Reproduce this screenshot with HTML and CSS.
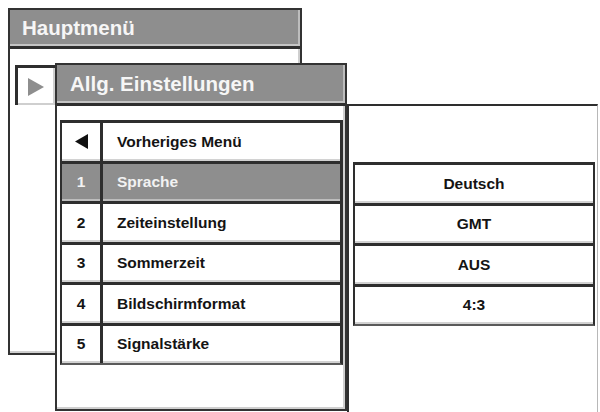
FILE: index.html
```html
<!DOCTYPE html>
<html lang="de">
<head>
<meta charset="utf-8">
<title>Allg. Einstellungen</title>
<link rel="stylesheet" href="styles.css">
</head>
<body>
<div class="screen">
  <section class="win win-main">
    <header class="win-title">Hauptmenü</header>
    <div class="main-body">
      <div class="crumb">
        <svg class="crumb-icon" width="16" height="18" viewBox="0 0 16 18"><polygon points="0,0 16,9 0,18" fill="#8e8e8e"/></svg>
      </div>
    </div>
  </section>

  <section class="win win-sub">
    <header class="win-title sub-title">Allg. Einstellungen</header>
    <div class="sub-body">
      <ul class="menu">
        <li class="row"><span class="num"><svg width="13" height="15" viewBox="0 0 13 15"><polygon points="13,0 0,7.5 13,15" fill="#111"/></svg></span><span class="label">Vorheriges Menü</span></li>
        <li class="row sel"><span class="num">1</span><span class="label">Sprache</span></li>
        <li class="row"><span class="num">2</span><span class="label">Zeiteinstellung</span></li>
        <li class="row"><span class="num">3</span><span class="label">Sommerzeit</span></li>
        <li class="row"><span class="num">4</span><span class="label">Bildschirmformat</span></li>
        <li class="row"><span class="num">5</span><span class="label">Signalstärke</span></li>
      </ul>
    </div>
  </section>

  <section class="win win-values">
    <ul class="values">
      <li class="value">Deutsch</li>
      <li class="value">GMT</li>
      <li class="value">AUS</li>
      <li class="value">4:3</li>
    </ul>
  </section>
</div>
</body>
</html>
```

FILE: styles.css
```css
* { box-sizing: border-box; }

html, body {
  margin: 0;
  padding: 0;
  background: #ffffff;
}

body {
  font-family: "Liberation Sans", Arial, Helvetica, sans-serif;
  font-weight: bold;
  color: #141414;
}

.screen {
  position: relative;
  width: 600px;
  height: 412px;
  overflow: hidden;
  background: #fff;
}

.win {
  position: absolute;
  background: #fff;
}

.win-main {
  left: 8px;
  top: 8px;
  width: 294px;
  height: 347px;
  border: 2px solid #333;
  box-shadow: inset -2px -2px 0 #cfcfcf;
  z-index: 1;
}

.win-title {
  height: 39px;
  line-height: 36px;
  padding-left: 12px;
  font-size: 20.5px;
  color: #f6f6f6;
  background: #8e8e8e;
  border-bottom: 3px solid #2e2e2e;
  box-shadow: inset 0 -2px 0 #c4c4c4, inset -2px 0 0 #bdbdbd;
}

.main-body {
  padding: 16px 0 0 5px;
}

.crumb {
  width: 40px;
  height: 40px;
  display: flex;
  align-items: center;
  padding-left: 10px;
  border-top: 3px solid #2e2e2e;
  border-left: 3px solid #2e2e2e;
  box-shadow: inset -2px -2px 0 #cfcfcf;
  background: #fff;
}

.win-sub {
  left: 55px;
  top: 63px;
  width: 292px;
  height: 348px;
  border: 2px solid #333;
  box-shadow: inset -2px -2px 0 #cfcfcf;
  z-index: 2;
}

.sub-title {
  height: 41px;
  line-height: 38px;
  padding-left: 13px;
}

.sub-body {
  padding: 14px 0 0 3px;
}

.menu {
  list-style: none;
  margin: 0;
  padding: 0;
  width: 283px;
  border-left: 2px solid #2e2e2e;
  border-right: 3px solid #2e2e2e;
  border-bottom: 2px solid #5a5a5a;
}

.row {
  display: flex;
  height: 40.5px;
  border-top: 3px solid #2e2e2e;
  background: #fff;
  box-shadow: inset 0 -2px 0 #d2d2d2;
  font-size: 15.5px;
}

.num {
  width: 41px;
  flex: none;
  display: flex;
  align-items: center;
  justify-content: center;
  border-right: 3px solid #2e2e2e;
}

.label {
  flex: 1;
  display: flex;
  align-items: center;
  padding-left: 14px;
}

.row.sel {
  background: #8e8e8e;
  color: #f2f2f2;
  box-shadow: inset 0 -2px 0 #bdbdbd;
}

.win-values {
  left: 347px;
  top: 104px;
  width: 251px;
  height: 308px;
  border-top: 2px solid #2e2e2e;
  border-left: 2px solid #2e2e2e;
  border-right: 1px solid #b8b8b8;
  z-index: 3;
}

.values {
  list-style: none;
  margin: 56px 0 0 4px;
  padding: 0;
  width: 242px;
  border-left: 2px solid #2e2e2e;
  border-right: 2px solid #2e2e2e;
  border-bottom: 2px solid #5a5a5a;
}

.value {
  height: 40.5px;
  display: flex;
  align-items: center;
  justify-content: center;
  border-top: 3px solid #2e2e2e;
  box-shadow: inset 0 -2px 0 #d2d2d2;
  font-size: 15.5px;
}
```
